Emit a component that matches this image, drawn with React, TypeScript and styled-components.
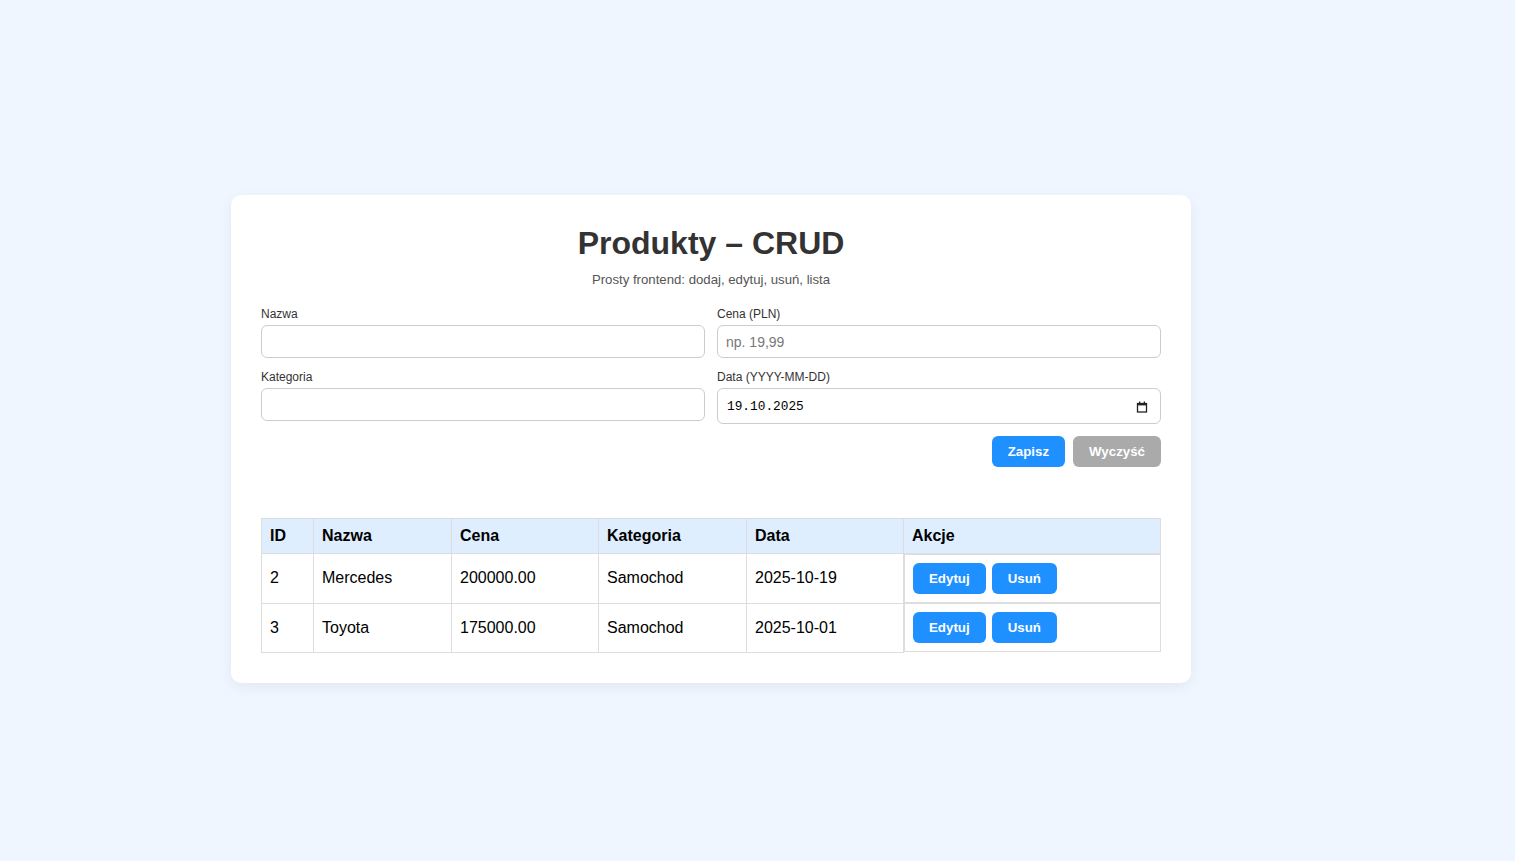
import React from "react";
import styled, { createGlobalStyle } from "styled-components";

const Global = createGlobalStyle`
  html, body { margin: 0; padding: 0; }
  body {
    background: #eff6ff;
    font-family: "Liberation Sans", Arial, sans-serif;
    color: #222;
  }
`;

const Page = styled.div`
  min-height: 861px;
  box-sizing: border-box;
  padding: 195px 0 0 231px;
`;

const Card = styled.div`
  width: 960px;
  box-sizing: border-box;
  background: #fff;
  border-radius: 10px;
  padding: 30px;
  box-shadow: 0 4px 14px rgba(0, 0, 0, 0.06);
`;

const Title = styled.h1`
  margin: 0;
  text-align: center;
  font-size: 32px;
  line-height: 37px;
  font-weight: 700;
  color: #333;
`;

const Subtitle = styled.p`
  margin: 10px 0 20px;
  text-align: center;
  font-size: 13.2px;
  line-height: 15px;
  color: #555;
`;

const FormGrid = styled.div`
  display: grid;
  grid-template-columns: 1fr 1fr;
  column-gap: 12px;
  row-gap: 12px;
`;

const Field = styled.div`
  display: flex;
  flex-direction: column;
  gap: 4px;
`;

const Label = styled.label`
  font-size: 12px;
  line-height: 14px;
  color: #333;
`;

const TextInput = styled.input`
  box-sizing: border-box;
  height: 33px;
  width: 100%;
  padding: 0 8px;
  border: 1px solid #ccc;
  border-radius: 6px;
  font-family: "Liberation Sans", Arial, sans-serif;
  font-size: 14px;
  color: #222;
  outline: none;
  &::placeholder { color: #777; }
`;

const DateBox = styled.div`
  box-sizing: border-box;
  height: 36px;
  display: flex;
  align-items: center;
  justify-content: space-between;
  padding: 1px 12px 0 9px;
  border: 1px solid #ccc;
  border-radius: 6px;
  font-family: "Liberation Mono", "DejaVu Sans Mono", monospace;
  font-size: 12.8px;
  color: #000;
`;

const Actions = styled.div`
  display: flex;
  justify-content: flex-end;
  gap: 8px;
  margin-top: 12px;
`;

const Button = styled.button<{ $variant?: "primary" | "muted" }>`
  height: 31px;
  padding: 0 16px;
  border: none;
  border-radius: 6px;
  background: ${(p) => (p.$variant === "muted" ? "#aaaaaa" : "#1e90ff")};
  color: #fff;
  font-family: "Liberation Sans", Arial, sans-serif;
  font-size: 13.3px;
  font-weight: 700;
  cursor: pointer;
`;

const Table = styled.table`
  width: 100%;
  margin-top: 51px;
  border-collapse: collapse;
  font-size: 16px;
  color: #000;
`;

const Th = styled.th<{ $w?: number }>`
  text-align: left;
  font-weight: 700;
  background: #dfeefe;
  border: 1px solid #ddd;
  padding: 8px;
  height: 18px;
  line-height: 18px;
  ${(p) => (p.$w ? `width: ${p.$w}px;` : "")}
`;

const Td = styled.td`
  border: 1px solid #ddd;
  padding: 8px;
  line-height: 18px;
  height: 31px;
`;

const ActionCell = styled.td`
  border: 1px solid #ddd;
  padding: 8px;
  display: flex;
  gap: 6px;
`;

const SmallButton = styled(Button)``;

const CalendarIcon = () => (
  <svg width="12" height="12" viewBox="0 0 12 12" aria-hidden>
    <rect x="1.5" y="2.5" width="9" height="8.5" fill="none" stroke="#222" strokeWidth="1.3" />
    <rect x="1" y="2" width="10" height="2.4" fill="#222" />
    <rect x="3" y="0.5" width="1.3" height="2.5" fill="#222" />
    <rect x="7.7" y="0.5" width="1.3" height="2.5" fill="#222" />
  </svg>
);

const rows = [
  { id: 2, name: "Mercedes", price: "200000.00", cat: "Samochod", date: "2025-10-19" },
  { id: 3, name: "Toyota", price: "175000.00", cat: "Samochod", date: "2025-10-01" },
];

export default function App() {
  return (
    <>
      <Global />
      <Page>
        <Card>
          <Title>Produkty – CRUD</Title>
          <Subtitle>Prosty frontend: dodaj, edytuj, usuń, lista</Subtitle>
          <FormGrid>
            <Field>
              <Label>Nazwa</Label>
              <TextInput />
            </Field>
            <Field>
              <Label>Cena (PLN)</Label>
              <TextInput placeholder="np. 19,99" />
            </Field>
            <Field>
              <Label>Kategoria</Label>
              <TextInput />
            </Field>
            <Field>
              <Label>Data (YYYY-MM-DD)</Label>
              <DateBox>
                <span>19.10.2025</span>
                <CalendarIcon />
              </DateBox>
            </Field>
          </FormGrid>
          <Actions>
            <Button>Zapisz</Button>
            <Button $variant="muted">Wyczyść</Button>
          </Actions>
          <Table>
            <thead>
              <tr>
                <Th $w={35}>ID</Th>
                <Th $w={121}>Nazwa</Th>
                <Th $w={130}>Cena</Th>
                <Th $w={131}>Kategoria</Th>
                <Th $w={140}>Data</Th>
                <Th>Akcje</Th>
              </tr>
            </thead>
            <tbody>
              {rows.map((r) => (
                <tr key={r.id}>
                  <Td>{r.id}</Td>
                  <Td>{r.name}</Td>
                  <Td>{r.price}</Td>
                  <Td>{r.cat}</Td>
                  <Td>{r.date}</Td>
                  <ActionCell>
                    <SmallButton>Edytuj</SmallButton>
                    <SmallButton>Usuń</SmallButton>
                  </ActionCell>
                </tr>
              ))}
            </tbody>
          </Table>
        </Card>
      </Page>
    </>
  );
}
